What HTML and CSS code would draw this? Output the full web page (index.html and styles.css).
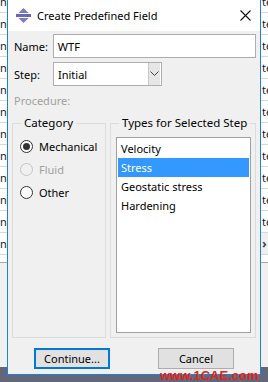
FILE: index.html
```html
<!DOCTYPE html>
<html lang="en">
<head>
    <meta charset="UTF-8">
    <title>Create Predefined Field</title>
    <link rel="stylesheet" href="styles.css">
</head>
<body>
    <div class="screen">
        <div class="side side-left">
            <div class="cell">np</div>
            <div class="cell">np</div>
            <div class="cell">np</div>
            <div class="cell">np</div>
            <div class="cell">np</div>
            <div class="cell">np</div>
            <div class="cell">np</div>
            <div class="cell">np</div>
            <div class="cell">np</div>
            <div class="cell">np</div>
            <div class="cell">np</div>
            <div class="cell">np</div>
            <div class="side-rest"></div>
        </div>

        <div class="dialog">
            <div class="titlebar">
                <svg class="app-icon" width="15" height="15" viewBox="0 0 15 15">
                    <polygon points="7.5,0 12.5,5 2.5,5" fill="#7c7cc0"/>
                    <rect x="0" y="6" width="15" height="3" fill="#6a6ab4"/>
                    <polygon points="2.5,10 12.5,10 7.5,15" fill="#7c7cc0"/>
                </svg>
                <span class="title">Create Predefined Field</span>
                <svg class="close" width="11" height="11" viewBox="0 0 11 11">
                    <path d="M0.5 0.5 L10.5 10.5 M10.5 0.5 L0.5 10.5" stroke="#111" stroke-width="1.1"/>
                </svg>
            </div>

            <div class="content">
                <div class="row">
                    <span class="label">Name:</span>
                    <div class="input name-input">WTF</div>
                </div>
                <div class="row">
                    <span class="label">Step:</span>
                    <div class="input step-select">
                        <span class="value">Initial</span>
                        <span class="drop">
                            <svg width="9" height="6" viewBox="0 0 9 6">
                                <path d="M0.5 0.5 L4.5 4.5 L8.5 0.5" fill="none" stroke="#444" stroke-width="1"/>
                            </svg>
                        </span>
                    </div>
                </div>
                <div class="procedure">Procedure:</div>

                <div class="groups">
                    <fieldset class="group category">
                        <legend>Category</legend>
                        <div class="radio checked"><span class="dot"></span>Mechanical</div>
                        <div class="radio disabled"><span class="dot"></span>Fluid</div>
                        <div class="radio"><span class="dot"></span>Other</div>
                    </fieldset>
                    <fieldset class="group types">
                        <legend>Types for Selected Step</legend>
                        <ul class="listbox">
                            <li>Velocity</li>
                            <li class="selected">Stress</li>
                            <li>Geostatic stress</li>
                            <li>Hardening</li>
                        </ul>
                    </fieldset>
                </div>

                <div class="buttons">
                    <button class="btn default">Continue...</button>
                    <button class="btn">Cancel</button>
                </div>
            </div>
        </div>

        <div class="side side-right">
            <div class="cell">te</div>
            <div class="cell">te</div>
            <div class="cell">te</div>
            <div class="cell">te</div>
            <div class="cell">te</div>
            <div class="cell">te</div>
            <div class="cell">te</div>
            <div class="cell">te</div>
            <div class="cell">te</div>
            <div class="cell">te</div>
            <div class="cell">te</div>
            <div class="cell more">&rsaquo;</div>
            <div class="side-rest"></div>
        </div>
    </div>

    <div class="watermark">www.1CAE.com</div>
</body>
</html>
```

FILE: styles.css
```css
body {
    margin: 0;
    background: #62687a;
    font-family: "Noto Sans", "Open Sans", sans-serif;
    font-size: 11px;
    color: #000;
    width: 268px;
    height: 382px;
    overflow: hidden;
    position: relative;
}
.screen {
    display: flex;
    height: 382px;
}

/* table behind the dialog */
.side {
    height: 376px;
    display: flex;
    flex-direction: column;
    overflow: hidden;
    background: #ffffff;
    margin-top: -9px;
}
.side-left {
    width: 7px;
}
.side-right {
    width: 7px;
}
.cell {
    flex: none;
    height: 21px;
    border-bottom: 1px solid #d8d8d8;
    line-height: 21px;
    white-space: nowrap;
    color: #1a1a2a;
    font-size: 11px;
}
.side-left .cell {
    text-align: right;
    letter-spacing: -0.5px;
}
.side-right .cell {
    padding-left: 1px;
}
.cell.more {
    font-size: 13px;
    font-weight: bold;
    color: #444;
    background: #f0f0f0;
}
.side-rest {
    flex: 1;
    background: #f0f0f0;
    border-top: 1px solid #a8a8a8;
    margin-top: 7px;
}

/* dialog */
.dialog {
    width: 252px;
    height: 374px;
    border: 1px solid #1883d7;
    border-top: none;
    display: flex;
    flex-direction: column;
    background: #f0f0f0;
}
.titlebar {
    height: 31px;
    background: #ffffff;
    display: flex;
    align-items: center;
    padding: 0 9px 0 8px;
}
.app-icon {
    flex: none;
    margin-top: -1px;
}
.title {
    flex: 1;
    margin-left: 6px;
    font-size: 11px;
}
.close {
    flex: none;
}

.content {
    flex: 1;
    display: flex;
    flex-direction: column;
    padding: 3px 4px 5px 4px;
}
.row {
    display: flex;
    align-items: center;
    height: 24px;
    margin-bottom: 4px;
    padding-left: 2px;
}
.label {
    width: 39px;
}
.input {
    border: 1px solid #adadad;
    background: #fff;
    display: flex;
    align-items: center;
    padding-left: 4px;
    box-sizing: border-box;
    height: 24px;
}
.name-input {
    width: 204px;
}
.step-select {
    width: 109px;
    padding-right: 1px;
}
.step-select .value {
    flex: 1;
}
.drop {
    width: 11px;
    height: 22px;
    background: #e6e6e6;
    border-left: 1px solid #c8c8c8;
    display: flex;
    align-items: center;
    justify-content: center;
}
.procedure {
    color: #a0a0a0;
    margin-top: 3px;
    padding-left: 2px;
    line-height: 16px;
}

.groups {
    display: flex;
    gap: 4px;
    margin-top: 7px;
    height: 222px;
}
.group {
    margin: 0;
    padding: 0;
    border: 1px solid #dcdcdc;
    display: flex;
    flex-direction: column;
    min-width: 0;
}
.group legend {
    margin-left: 8px;
    padding: 0 3px;
    line-height: 14px;
    white-space: nowrap;
    font-size: 11.5px;
}
.category {
    width: 92px;
}
.types {
    flex: 1;
}
.radio {
    display: flex;
    align-items: center;
    height: 23px;
    padding-left: 7px;
}
.radio:first-of-type {
    margin-top: 5px;
}
.dot {
    width: 11px;
    height: 11px;
    border: 1px solid #333;
    border-radius: 50%;
    background: #fff;
    margin-right: 6px;
    display: flex;
    align-items: center;
    justify-content: center;
}
.radio.checked .dot::after {
    content: "";
    width: 7px;
    height: 7px;
    border-radius: 50%;
    background: #333;
}
.radio.disabled {
    color: #a0a0a0;
}
.radio.disabled .dot {
    border-color: #c4c4c4;
    background: #f0f0f0;
}
.listbox {
    list-style: none;
    margin: 7px 4px 4px 5px;
    padding: 1px;
    flex: 1;
    background: #fff;
    border: 1px solid #a0a0a0;
}
.listbox li {
    height: 19px;
    line-height: 19px;
    padding-left: 3px;
}
.listbox li.selected {
    background: #3399ff;
    color: #fff;
}

.buttons {
    display: flex;
    gap: 48px;
    margin-top: 10px;
    padding-left: 22px;
}
.btn {
    width: 76px;
    height: 21px;
    font-family: inherit;
    font-size: 11px;
    background: #e1e1e1;
    border: 1px solid #adadad;
    padding: 0;
    line-height: 17px;
}
.btn.default {
    border: 2px solid #0078d7;
}

.watermark {
    position: absolute;
    left: 160px;
    top: 368px;
    font-family: "Liberation Sans", sans-serif;
    font-weight: bold;
    font-size: 13px;
    color: #e2261b;
}
```
